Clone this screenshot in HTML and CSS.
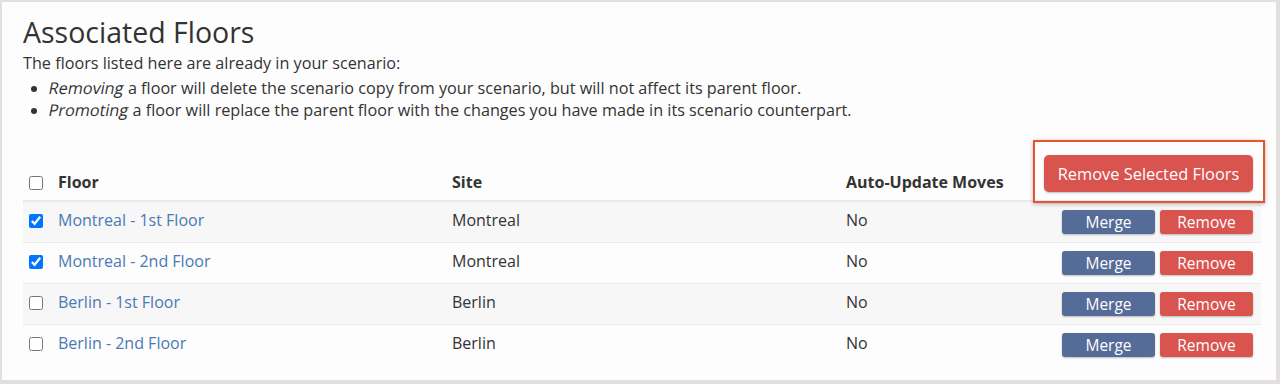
FILE: index.html
```html
<!DOCTYPE html>
<html>
<head>
<meta charset="utf-8">
<link rel="stylesheet" href="styles.css">
</head>
<body>
<div class="frame">
  <h2 class="title">Associated Floors</h2>
  <p class="intro">The floors listed here are already in your scenario:</p>
  <ul class="notes">
    <li><em>Removing</em> a floor will delete the scenario copy from your scenario, but will not affect its parent floor.</li>
    <li><em>Promoting</em> a floor will replace the parent floor with the changes you have made in its scenario counterpart.</li>
  </ul>
  <div class="table-wrap">
    <table class="floors">
      <colgroup>
        <col class="c-check"><col class="c-floor"><col class="c-site"><col class="c-auto"><col class="c-act">
      </colgroup>
      <thead>
        <tr>
          <th><input type="checkbox" class="cb"></th>
          <th>Floor</th>
          <th>Site</th>
          <th>Auto-Update Moves</th>
          <th class="act"><button class="btn btn-danger btn-lg">Remove Selected Floors</button></th>
        </tr>
      </thead>
      <tbody>
        <tr>
          <td><input type="checkbox" class="cb" checked></td>
          <td><a href="#">Montreal - 1st Floor</a></td>
          <td>Montreal</td>
          <td>No</td>
          <td class="act"><button class="btn btn-merge">Merge</button><button class="btn btn-danger">Remove</button></td>
        </tr>
        <tr>
          <td><input type="checkbox" class="cb" checked></td>
          <td><a href="#">Montreal - 2nd Floor</a></td>
          <td>Montreal</td>
          <td>No</td>
          <td class="act"><button class="btn btn-merge">Merge</button><button class="btn btn-danger">Remove</button></td>
        </tr>
        <tr>
          <td><input type="checkbox" class="cb"></td>
          <td><a href="#">Berlin - 1st Floor</a></td>
          <td>Berlin</td>
          <td>No</td>
          <td class="act"><button class="btn btn-merge">Merge</button><button class="btn btn-danger">Remove</button></td>
        </tr>
        <tr>
          <td><input type="checkbox" class="cb"></td>
          <td><a href="#">Berlin - 2nd Floor</a></td>
          <td>Berlin</td>
          <td>No</td>
          <td class="act"><button class="btn btn-merge">Merge</button><button class="btn btn-danger">Remove</button></td>
        </tr>
      </tbody>
    </table>
    <div class="highlight"></div>
  </div>
</div>
</body>
</html>
```
FILE: styles.css
```css
html, body {
  margin: 0;
  padding: 0;
  background: #e3dfdf;
}
body {
  font-family: "Open Sans", "Liberation Sans", sans-serif;
  color: #333;
  font-size: 16px;
}
.frame {
  box-sizing: border-box;
  width: 1280px;
  height: 384px;
  border: 2px solid #e3dfdf;
  border-right-width: 4px;
  border-bottom-width: 4px;
  background: #fdfdfd;
  padding: 0 0 0 21px;
  overflow: hidden;
}
.title {
  margin: 14px 0 0 0;
  font-size: 28.5px;
  font-weight: 400;
  line-height: 32px;
  color: #333;
}
.intro {
  margin: 4px 0 3px 0;
  font-size: 16.2px;
  line-height: 22px;
}
.notes {
  margin: 0;
  padding-left: 26px;
  font-size: 16.2px;
  line-height: 22px;
}
.notes em {
  font-style: normal;
  display: inline-block;
  transform: skewX(-11deg);
}
.table-wrap {
  position: relative;
  margin-top: 26px;
  width: 1238px;
}
.floors {
  width: 1238px;
  border-collapse: collapse;
  table-layout: fixed;
}
.c-check { width: 27px; }
.c-floor { width: 394px; }
.c-site { width: 394px; }
.c-auto { width: 198px; }
.c-act { width: 225px; }
.floors th, .floors td {
  padding: 8px;
  line-height: 20px;
  text-align: left;
}
.floors th {
  vertical-align: bottom;
  font-weight: 700;
  border-bottom: 2px solid #e9e9e9;
}
.floors th:first-child, .floors td:first-child {
  padding-left: 6px;
  padding-right: 0;
}
.floors td {
  vertical-align: top;
  border-top: 1px solid #e9e9e9;
}
.floors tbody tr:nth-child(odd) {
  background: #f7f7f7;
}
.floors tbody tr:first-child td {
  border-top: 0;
}
.floors .act {
  text-align: right;
  white-space: nowrap;
  font-size: 0;
}
.floors a {
  color: #4a79b5;
  text-decoration: none;
}
.cb {
  width: 14px;
  height: 14px;
  margin: 0;
  vertical-align: -2px;
}
.btn {
  font-family: "Open Sans", "Liberation Sans", sans-serif;
  border: 0;
  color: #fff;
  font-size: 15.5px;
  line-height: 18px;
  height: 24px;
  width: 93px;
  padding: 0;
  border-radius: 3px;
  box-shadow: 0 1px 2px rgba(0,0,0,.25);
  vertical-align: top;
}
.btn-merge {
  background: #556b98;
  margin-right: 5px;
}
.btn-danger {
  background: #d9534f;
}
.btn-lg {
  width: 209px;
  height: 37px;
  font-size: 16.4px;
  border-radius: 5px;
  vertical-align: bottom;
}
.highlight {
  position: absolute;
  left: 1010px;
  top: -7px;
  width: 228px;
  height: 59px;
  border: 2px solid #e4572e;
  box-shadow: 0 1px 4px rgba(0,0,0,.3);
  pointer-events: none;
}
```
